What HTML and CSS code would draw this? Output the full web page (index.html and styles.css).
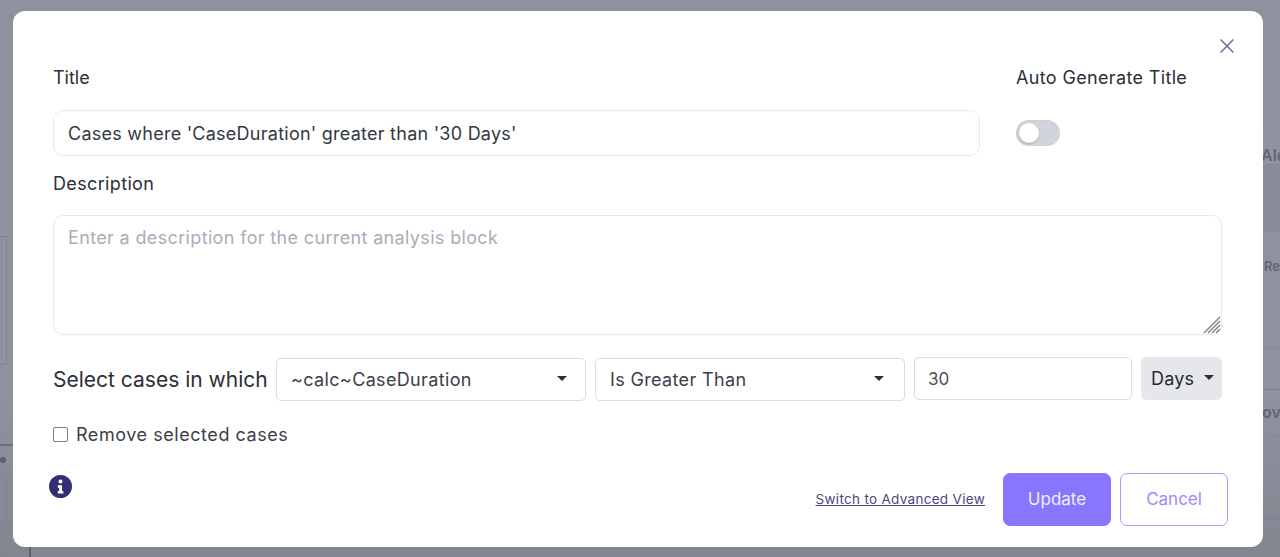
FILE: index.html
```html
<!DOCTYPE html>
<html lang="en">
<head>
<meta charset="utf-8">
<title>Edit analysis block</title>
<link rel="stylesheet" href="styles.css">
</head>
<body>
<div class="backdrop">
  <span class="bg-band band-a"></span>
  <span class="bg-band band-b"></span>
  <span class="bg-rule rule-a"></span>
  <span class="bg-rule rule-b"></span>
  <span class="bg-rule rule-c"></span>
  <span class="bg-rule rule-d"></span>
  <span class="bg-rule rule-e"></span>
  <span class="bg-box box-a"></span>
  <span class="bg-box box-b"></span>
  <span class="bg-word bg-ale">Ale</span>
  <span class="bg-word bg-re">Re</span>
  <span class="bg-word bg-ov">ov</span>
  <span class="bg-dot"></span>
  <span class="bg-vline"></span>
  <span class="bg-hline"></span>
</div>
<main class="modal">
  <button class="close" aria-label="Close">
    <svg viewBox="0 0 14 14" width="14" height="14"><path d="M.6.6l12.8 12.8M13.4.6L.6 13.4" fill="none" stroke="#6a6596" stroke-width="1.4"/></svg>
  </button>
  <div class="title-row">
    <div class="title-col">
      <label class="label title-label">Title</label>
      <div class="input title-input">Cases where 'CaseDuration' greater than '30 Days'</div>
    </div>
    <div class="auto-col">
      <label class="label auto-label">Auto Generate Title</label>
      <div class="toggle"><span class="knob"></span></div>
    </div>
  </div>
  <label class="label desc-label">Description</label>
  <div class="textarea">Enter a description for the current analysis block
    <svg class="grip" viewBox="0 0 18 18" width="18" height="18"><path d="M17 1L1 17M17 5L5 17M17 9L9 17M17 13L13 17" fill="none" stroke="#85878c" stroke-width="1.5"/></svg>
  </div>
  <div class="select-row">
    <span class="select-label">Select cases in which</span>
    <div class="select sel-a"><span>~calc~CaseDuration</span><i class="caret"></i></div>
    <div class="select sel-b"><span>Is Greater Than</span><i class="caret"></i></div>
    <div class="value">30</div>
    <div class="unit"><span>Days</span><i class="caret"></i></div>
  </div>
  <label class="check-row"><span class="checkbox"></span><span>Remove selected cases</span></label>
  <div class="footer">
    <svg class="info" viewBox="0 0 24 24" width="23" height="23"><circle cx="12" cy="12" r="12" fill="#332e74"/><path fill="#fff" d="M12 4.6a2.1 2.1 0 1 1 0 4.2 2.1 2.1 0 0 1 0-4.2zM9.2 10.6h4.4v6h1.4v2.6H9.2v-2.6h1.4v-3.4H9.2z"/></svg>
    <div class="actions">
      <a class="switch" href="#">Switch to Advanced View</a>
      <button class="btn primary">Update</button>
      <button class="btn outline">Cancel</button>
    </div>
  </div>
</main>
</body>
</html>
```
FILE: styles.css
```css
* { box-sizing: border-box; }
html, body { margin: 0; height: 100%; }
body {
  width: 1280px; height: 557px; overflow: hidden; position: relative;
  background: #8f929f;
  font-family: "Inter", "Noto Sans", sans-serif;
  color: #2b2f38;
}
.backdrop { position: absolute; inset: 0; background: linear-gradient(#8f929e 0, #8f929e 400px, #838691 557px); }
.bg-band { position: absolute; left: 1263px; width: 17px; }
.band-a { top: 125px; height: 39px; background: #9194a0; }
.band-b { top: 164px; height: 68px; background: #888b98; }
.bg-rule { position: absolute; left: 1263px; width: 17px; height: 1px; background: #868995; }
.rule-a { top: 347px; }
.rule-b { top: 389px; background: #7b7da0; }
.rule-c { top: 435px; }
.rule-d { top: 477px; }
.rule-e { top: 518px; background: #7b7da0; }
.bg-box { position: absolute; left: 0; width: 7px; border: 1px solid #80838f; border-left: 0; }
.box-a { top: 236px; height: 129px; }
.box-b { top: 473px; height: 84px; border-bottom: 0; }
.bg-word { position: absolute; font-size: 16px; font-weight: 600; color: #62647c; }
.bg-ale { left: 1261px; top: 145px; }
.bg-re { left: 1264px; top: 258px; font-size: 13px; }
.bg-ov { left: 1262px; top: 402px; }
.bg-dot { position: absolute; left: 0; top: 457px; width: 6px; height: 6px; border-radius: 50%; background: #5d5f78; }
.bg-vline { position: absolute; left: 29px; top: 547px; width: 2px; height: 10px; background: #5d5f78; }
.bg-hline { position: absolute; left: 0; top: 444px; width: 13px; height: 2px; background: #6a6c84; }
.modal {
  position: absolute; left: 13px; top: 11px; width: 1250px; height: 536px;
  background: #fff; border-radius: 12px;
  padding: 56px 41px 0 40px;
}
.close { position: absolute; right: 29px; top: 28px; padding: 0; border: 0; background: none; display: flex; }
.title-row { display: flex; gap: 36px; }
.title-col { width: 927px; }
.label { display: block; font-size: 18px; line-height: 22px; color: #2b2f38; }
.title-label { letter-spacing: 0; }
.auto-label { letter-spacing: .35px; white-space: nowrap; }
.input {
  margin-top: 21px; height: 46px; border: 1px solid #e8eaee; border-radius: 10px;
  padding: 0 14px; display: flex; align-items: center;
  font-size: 18px; letter-spacing: .25px; color: #333842;
}
.toggle {
  margin-top: 31px; width: 44px; height: 26px; border-radius: 13px; background: #d1d5db;
  padding: 3px; box-shadow: inset 1px 0 2px rgba(0,0,0,.08);
}
.knob { display: block; width: 20px; height: 20px; border-radius: 50%; background: #fff; box-shadow: 0 1px 2px rgba(0,0,0,.2); }
.desc-label { margin-top: 17px; letter-spacing: .35px; }
.textarea {
  position: relative; margin-top: 20px; height: 120px; width: 1169px;
  border: 1px solid #e8eaee; border-radius: 10px; padding: 10px 14px;
  font-size: 18px; line-height: 24px; letter-spacing: .35px; color: #a9adb8;
}
.grip { position: absolute; right: 0; bottom: 0; }
.select-row { display: flex; align-items: flex-start; gap: 9px; margin-top: 22px; }
.select-label { flex: none; width: 214px; line-height: 45px; font-size: 21px; letter-spacing: 0; color: #2b2f38; white-space: nowrap; }
.select {
  flex: none; height: 43px; width: 310px; margin-top: 1px; border: 1px solid #d8dce3; border-radius: 5px;
  display: flex; align-items: center; justify-content: space-between;
  padding: 0 18px 0 14px; font-size: 18px; letter-spacing: .35px; color: #3b404a;
}
.sel-b { padding-right: 20px; }
.value {
  flex: none; height: 43px; width: 218px; border: 1px solid #d8dce3; border-radius: 5px;
  padding: 0 13px; display: flex; align-items: center; font-size: 17px; color: #4a4f59;
}
.unit {
  flex: none; height: 43px; width: 81px; border-radius: 5px; background: #e5e7eb;
  display: flex; align-items: center; gap: 10px; padding-left: 10px; font-size: 18px; letter-spacing: .2px; color: #262a33;
}
.caret { width: 0; height: 0; margin-top: -2px; border-left: 5px solid transparent; border-right: 5px solid transparent; border-top: 5px solid #2b2f38; }
.check-row { display: flex; align-items: center; gap: 8px; margin-top: 22px; font-size: 18px; letter-spacing: .55px; color: #3b404a; }
.checkbox { width: 15px; height: 15px; border: 1.5px solid #7a7e8a; border-radius: 2px; }
.footer { display: flex; justify-content: space-between; align-items: flex-start; margin: 28px -6px 0 -4px; }
.info { margin-top: 2px; }
.actions { display: flex; align-items: center; }
.switch { margin: -2px 18px 0 0; font-size: 13.5px; letter-spacing: .3px; color: #4b4780; text-decoration: underline; }
.btn { width: 108px; height: 53px; padding-bottom: 3px; border-radius: 7px; font: inherit; font-size: 17px; }
.primary { background: #8876ff; border: 1px solid #8876ff; color: #f1eeff; }
.outline { background: #fff; border: 1.5px solid #a99cff; color: #9a8aff; margin-left: 9px; }
```
